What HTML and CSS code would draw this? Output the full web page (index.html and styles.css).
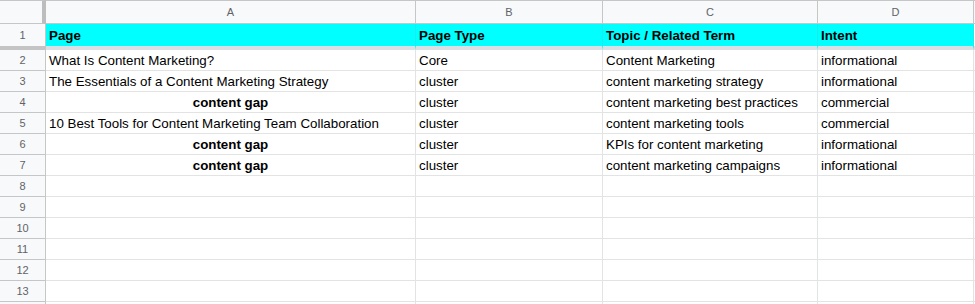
FILE: index.html
```html
<!DOCTYPE html>
<html lang="en">
<head>
<meta charset="utf-8">
<title>Content Marketing Cluster</title>
<link rel="stylesheet" href="styles.css">
</head>
<body>
<div class="sheet">
  <div class="corner"></div>
  <div class="colhead">A</div>
  <div class="colhead">B</div>
  <div class="colhead">C</div>
  <div class="colhead">D</div>
  <div class="colhead colhead-last"></div>

  <div class="rowhead rowhead-frozen">1</div>
  <div class="cell hdr">Page</div>
  <div class="cell hdr">Page Type</div>
  <div class="cell hdr">Topic / Related Term</div>
  <div class="cell hdr">Intent</div>
  <div class="cell hdr-rest"></div>

  <div class="rowhead">2</div>
  <div class="cell">What Is Content Marketing?</div>
  <div class="cell">Core</div>
  <div class="cell">Content Marketing</div>
  <div class="cell">informational</div>
  <div class="cell"></div>

  <div class="rowhead">3</div>
  <div class="cell">The Essentials of a Content Marketing Strategy</div>
  <div class="cell">cluster</div>
  <div class="cell">content marketing strategy</div>
  <div class="cell">informational</div>
  <div class="cell"></div>

  <div class="rowhead">4</div>
  <div class="cell gap">content gap</div>
  <div class="cell">cluster</div>
  <div class="cell">content marketing best practices</div>
  <div class="cell">commercial</div>
  <div class="cell"></div>

  <div class="rowhead">5</div>
  <div class="cell">10 Best Tools for Content Marketing Team Collaboration</div>
  <div class="cell">cluster</div>
  <div class="cell">content marketing tools</div>
  <div class="cell">commercial</div>
  <div class="cell"></div>

  <div class="rowhead">6</div>
  <div class="cell gap">content gap</div>
  <div class="cell">cluster</div>
  <div class="cell">KPIs for content marketing</div>
  <div class="cell">informational</div>
  <div class="cell"></div>

  <div class="rowhead">7</div>
  <div class="cell gap">content gap</div>
  <div class="cell">cluster</div>
  <div class="cell">content marketing campaigns</div>
  <div class="cell">informational</div>
  <div class="cell"></div>

  <div class="rowhead">8</div>
  <div class="cell"></div><div class="cell"></div><div class="cell"></div><div class="cell"></div><div class="cell"></div>
  <div class="rowhead">9</div>
  <div class="cell"></div><div class="cell"></div><div class="cell"></div><div class="cell"></div><div class="cell"></div>
  <div class="rowhead">10</div>
  <div class="cell"></div><div class="cell"></div><div class="cell"></div><div class="cell"></div><div class="cell"></div>
  <div class="rowhead">11</div>
  <div class="cell"></div><div class="cell"></div><div class="cell"></div><div class="cell"></div><div class="cell"></div>
  <div class="rowhead">12</div>
  <div class="cell"></div><div class="cell"></div><div class="cell"></div><div class="cell"></div><div class="cell"></div>
  <div class="rowhead">13</div>
  <div class="cell"></div><div class="cell"></div><div class="cell"></div><div class="cell"></div><div class="cell"></div>
  <div class="rowhead"></div>
  <div class="cell"></div><div class="cell"></div><div class="cell"></div><div class="cell"></div><div class="cell"></div>
</div>
</body>
</html>
```

FILE: styles.css
```css
* {
  box-sizing: border-box;
}

html, body {
  margin: 0;
  padding: 0;
  background: #ffffff;
  overflow: hidden;
}

body {
  font-family: "Liberation Sans", Arial, sans-serif;
  font-size: 13.33px;
  color: #000000;
}

.sheet {
  display: grid;
  grid-template-columns: 46px 370px 187px 215px 156px 1fr;
  grid-template-rows: 24px 26px repeat(13, 21px);
  width: 975px;
}

.corner {
  background: #f8f9fa;
  border-top: 1px solid #c4c7c5;
  border-right: 4px solid #bdbdbd;
  border-bottom: 1px solid #c4c7c5;
}

.colhead {
  background: #f8f9fa;
  border-top: 1px solid #c4c7c5;
  border-right: 1px solid #c4c7c5;
  border-bottom: 1px solid #c4c7c5;
  color: #5f6368;
  font-size: 11px;
  display: flex;
  align-items: center;
  justify-content: center;
}

.colhead-last {
  border-right: none;
}

.rowhead {
  background: #f8f9fa;
  border-right: 1px solid #c4c7c5;
  border-bottom: 1px solid #c4c7c5;
  color: #5f6368;
  font-size: 11px;
  display: flex;
  align-items: center;
  justify-content: center;
}

.rowhead-frozen {
  border-bottom: 4px solid #c4c4c4;
}

.cell {
  border-right: 1px solid #e2e3e3;
  border-bottom: 1px solid #e2e3e3;
  padding: 0 3px;
  white-space: nowrap;
  overflow: hidden;
  display: flex;
  align-items: center;
  line-height: 16px;
  padding-top: 1px;
}

.hdr {
  background: #00ffff;
  font-weight: bold;
  border-right: 1px solid #19eeee;
  border-bottom: 4px solid #dadfe3;
}

.hdr-rest {
  border-bottom: 4px solid #dadfe3;
}

.gap {
  font-weight: bold;
  justify-content: center;
}
```
